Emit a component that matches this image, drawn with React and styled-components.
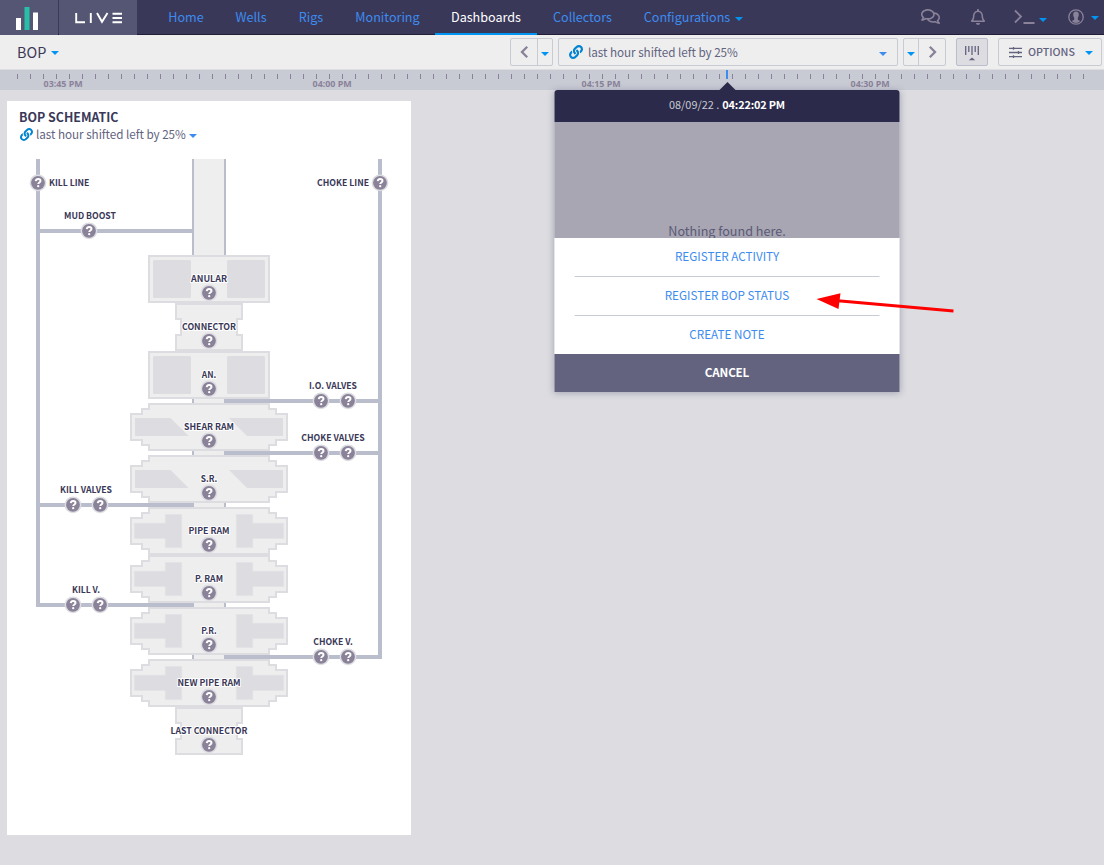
import React from 'react';
import styled, { createGlobalStyle } from 'styled-components';
import { FaLink, FaRegComments, FaRegBell } from 'react-icons/fa';

const c = {
  navy: '#3a3858', cell: '#555673', link: '#3c8cf0', azure: '#0095f3', grey: '#8a8299',
  bg: '#dcdce1', pale: '#eeeeee', pipe: '#b9bdcc', line: '#c8cad4', ink: '#3a3858', slate: '#636380',
};

const GlobalStyle = createGlobalStyle`
  * { box-sizing: border-box; }
  body {
    margin: 0; background: ${c.bg}; color: ${c.ink}; overflow: hidden;
    font-family: "Noto Sans CJK JP", "Noto Sans CJK SC", "Open Sans", sans-serif; line-height: 1;
  }
  button { font: inherit; color: inherit; margin: 0; padding: 0; border: 0; background: none; }
  svg { display: block; flex: none; }
`;

const Page = styled.div`display: flex; flex-direction: column; height: 865px; width: 1104px;`;
const Header = styled.header`display: flex; height: 35px; background: linear-gradient(${c.navy} 34px, #211e3a 34px);`;
const Brand = styled.div`
  width: ${(p) => p.$w}px; height: 35px; margin-right: ${(p) => p.$gap || 0}px; padding: ${(p) => p.$pad || 0};
  background: ${c.cell}; display: flex; align-items: center; justify-content: center;
`;
const Nav = styled.nav`display: flex; margin-left: 15px;`;
const NavItem = styled.a`
  width: ${(p) => p.$w}px; height: 35px; display: flex; align-items: center; justify-content: center; gap: 5px;
  padding: ${(p) => (p.$active ? '2px 0 0' : '0 0 0 1px')}; font-size: 12.6px; white-space: nowrap;
  color: ${(p) => (p.$active ? '#fff' : c.link)};
  border-bottom: ${(p) => (p.$active ? `2px solid ${c.azure}` : '0')};
`;
const Caret = styled.span`
  flex: none; width: 0; height: 0; border: 4px solid transparent; border-bottom: 0; border-top-color: ${(p) => p.$color || c.azure};
  margin-top: ${(p) => p.$drop || 0}px;
`;
const Tools = styled.div`display: flex; align-items: center; margin-left: auto; padding: 0 5px 2px 0; color: ${c.grey};`;
const Tool = styled.button`display: flex; align-items: center; gap: ${(p) => p.$gap || 0}px; margin-left: ${(p) => p.$ml || 0}px;`;

const Toolbar = styled.div`
  display: flex; align-items: center; height: 35px; padding: 0 2px 1px 17px; background: ${c.pale}; border-bottom: 1px solid ${c.bg};
`;
const PageName = styled.button`display: flex; align-items: center; gap: 5px; font-size: 14.4px; height: 30px; padding-top: 2px;`;
const Controls = styled.div`display: flex; margin-left: auto; height: 28px; align-items: stretch;`;
const Box = styled.div`
  display: flex; align-items: center; width: ${(p) => p.$w}px; margin-left: ${(p) => p.$ml || 0}px; height: 28px;
  border: 1px solid ${(p) => (p.$on ? '#b9bdcc' : c.line)}; border-radius: 2px; background: ${(p) => (p.$on ? c.bg : c.pale)};
  justify-content: ${(p) => p.$justify || 'flex-start'}; color: ${c.slate}; padding: ${(p) => p.$pad || 0};
`;
const Step = styled.button`
  display: flex; align-items: center; justify-content: center; height: 26px; width: ${(p) => p.$w}px;
  padding-top: ${(p) => p.$drop || 0}px;
  border-left: ${(p) => (p.$rule ? `1px solid ${c.line}` : '0')};
`;
const RangeText = styled.span`font-size: 11.7px; color: ${c.slate}; white-space: nowrap; padding-top: ${(p) => p.$drop || 0}px; letter-spacing: -0.04px;`;
const OptionText = styled.span`font-size: 10.7px; font-weight: 500; color: ${c.slate}; padding-top: 2px;`;
const Spacer = styled.span`flex: 1;`;

const Ruler = styled.div`
  height: 20px; background: ${c.line}; display: flex; flex-direction: column; padding-top: 4px;
`;
const Ticks = styled.div`
  height: 5px; width: 1067px; margin-left: 17px;
  background: repeating-linear-gradient(90deg, ${c.grey} 0 1px, transparent 1px 13px);
`;
const Times = styled.div`display: flex; margin-left: 29px;`;
const Time = styled.span`
  width: 269px; flex: none; font: 700 8.9px/10px "Open Sans", "Noto Sans", sans-serif; color: ${c.grey};
  padding-left: 14.6px; white-space: nowrap;
`;
const Main = styled.main`padding: 11px 7px 0;`;
const Card = styled.section`width: 404px; height: 734px; background: #fff;`;
const CardHead = styled.div`height: 58px; padding: 9px 12px 0;`;
const CardTitle = styled.h1`margin: 0; font-size: 12.4px; line-height: 15px; font-weight: 700;`;
const CardRange = styled.div`display: flex; align-items: center; height: 16px; margin: 1px 0 0 1px; gap: 3px;`;
const Label = styled.text`
  font-size: 9px; font-weight: 700; fill: ${c.ink}; stroke: #fff; stroke-width: 2px; stroke-linejoin: round; paint-order: stroke;
`;

const Marker = styled.div`position: absolute; left: 726px; top: 70px; width: 2px; height: 9px; background: ${c.link};`;
const Popup = styled.section`
  position: absolute; left: 554px; top: 90px; width: 345px; height: 302px; border-radius: 3px 3px 0 0; transform: translateX(0.5px);
  box-shadow: 0 1px 7px rgba(58, 56, 88, 0.35); display: flex; flex-direction: column;
  &::before {
    content: ''; position: absolute; left: 164.5px; top: -8px; border: 8px solid transparent; border-top: 0; border-bottom-color: #2b2a4a;
  }
`;
const PopupHead = styled.header`
  height: 32px; background: #2b2a4a; border-radius: 3px 3px 0 0; color: #c8cad4; font-size: 10.9px;
  display: flex; align-items: center; justify-content: center; gap: 3px; padding-bottom: 4px; white-space: nowrap;
  b { color: #fff; font-weight: 700; letter-spacing: -0.18px; }
`;
const Empty = styled.div`
  height: 116px; background: #a7a6b2; color: #5b5977; font-size: 12.6px; line-height: 14px; padding-top: 102px; text-align: center; overflow: hidden;
`;
const Actions = styled.div`height: 116px; background: #fff; padding: 0 20px;`;
const Action = styled.button`
  display: block; width: 100%; height: 39px; padding-bottom: 3px; font-size: 11.7px; color: ${c.link};
  border-bottom: 1px solid ${c.line};
  &:last-child { border-bottom: 0; height: 38px; padding-bottom: 2px; }
`;
const Cancel = styled.button`&& { height: 38px; background: ${c.slate}; color: #fff; font-size: 11.7px; font-weight: 700; padding-bottom: 3px; letter-spacing: -0.2px; }`;
const Pointer = styled.svg`position: absolute; left: 810px; top: 285px;`;

function Logo() {
  return (
    <svg width="24" height="24" viewBox="0 0 24 24">
      <path fill="#fff" d="M1 12h5v12H1zM18 6.500h5V24h-5z" /><path fill="#28bfa8" d="M9.500 1h5v23h-5z" />
    </svg>
  );
}
function LiveMark() {
  return (
    <svg width="48" height="12" viewBox="0 0 48 12" fill="none" stroke="#fff" strokeWidth="1.900">
      <path d="M1.200 1v9.200H10M15.800 1v10M22 1l5 8.800L32.500 1M37.500 1.700h9.500M37.500 6h9.500M37.500 10.200h9.500" />
    </svg>
  );
}
function Chevron({ back }) {
  return (
    <svg width="9" height="12" viewBox="0 0 9 12" fill="none" stroke={c.grey} strokeWidth="2.300">
      <path d={back ? 'M7.200 0.800L2 6l5.200 5.200' : 'M1.800 0.800L7 6l-5.200 5.200'} />
    </svg>
  );
}

function Help({ x, y }) {
  return (
    <g transform={`translate(${x} ${y})`}>
      <circle r="8.400" fill={c.bg} /><circle r="6.900" fill={c.grey} />
      <path d="M-2.300-1.600C-2.100-3.200-1.100-3.800.2-3.800 1.500-3.800 2.500-3 2.500-1.900 2.500-.3.200-.3.200 1.300" fill="none" stroke="#fff" strokeWidth="1.900" />
      <circle cx=".2" cy="3.400" r="1.150" fill="#fff" />
    </g>
  );
}
function Tag({ x, y, w, children }) {
  return <Label x={x - w / 2} y={y} textLength={w} lengthAdjust="spacingAndGlyphs">{children}</Label>;
}

const frames = {
  anular: 'M149 1h120v46H149z',
  connector: 'M176 1h66v15h-5v16h5v15h-66V32h5V16h-5z',
  ram: 'M149 1h120v5h7v5h11v26h-11v5h-7v5H149v-5h-7v-5h-11V11h11V6h7z',
};
const inner = {
  anular: <><rect x="153" y="5" width="38" height="38" rx="1.500" /><rect x="227" y="5" width="38" height="38" rx="1.500" /></>,
  shear: <path d="M135 15h35.500l18 18H135zM283 15h-54l18 18h36z" />,
  pipe: <path stroke="#e2e2e5" strokeWidth=".7" d="M134.300 16.300h31v-8.700h16.400v33h-16.400v-9.200h-31zM283.700 16.300h-31v-8.700h-16.400v33h16.400v-9.200h31z" />,
};
const stack = [
  ['ANULAR', 'anular', 255, 36], ['CONNECTOR', 'connector', 303, 54], ['AN.', 'anular', 351, 14.5],
  ['SHEAR RAM', 'shear', 403, 50], ['S.R.', 'shear', 455, 16.5], ['PIPE RAM', 'pipe', 507, 41],
  ['P. RAM', 'pipe', 555, 28], ['P.R.', 'pipe', 607, 15.5], ['NEW PIPE RAM', 'pipe', 659, 63],
  ['LAST CONNECTOR', 'connector', 707, 77],
];
const valves = [
  ['I.O. VALVES', 333, 401, 48], ['CHOKE VALVES', 333, 453, 63.5], ['CHOKE V.', 333, 657, 39.5],
  ['KILL VALVES', 86, 505, 52], ['KILL V.', 86, 605, 28],
];

function Schematic() {
  return (
    <svg width="404" height="606" viewBox="7 159 404 606">
      <path fill={c.pale} stroke={c.pipe} strokeWidth="2" d="M193 150v520h32V150" />
      <path fill="none" stroke={c.pipe} strokeWidth="4" d="M38 159v446h156M38 231h154M38 505h156M380 159v498H224M380 401H224M380 453H224" />
      {stack.map(([name, kind, y, w]) => (
        <g key={name} transform={`translate(0 ${y})`}>
          <path d={frames[kind] || frames.ram} fill={c.pale} stroke={c.bg} strokeWidth="2" />
          <g fill={c.bg}>{inner[kind]}</g>
          <Help x={209} y={37.8} />
          <Tag x={209} y={27} w={w}>{name}</Tag>
        </g>
      ))}
      {valves.map(([name, x, y, w]) => (
        <g key={name}>
          <Help x={x - 12 - (x < 200 ? 1 : 0)} y={y - 0.2} /><Help x={x + 15 - (x < 200 ? 1 : 0)} y={y - 0.2} />
          <Tag x={x} y={y - 12} w={w}>{name}</Tag>
        </g>
      ))}
      <Help x={38} y={182.8} /><Tag x={69.2} y={186} w={40.5}>KILL LINE</Tag>
      <Help x={380} y={182.8} /><Tag x={343} y={186} w={52}>CHOKE LINE</Tag>
      <Help x={89} y={230.8} /><Tag x={90} y={219} w={52}>MUD BOOST</Tag>
    </svg>
  );
}

const nav = [['Home', 67], ['Wells', 63], ['Rigs', 57], ['Monitoring', 96], ['Dashboards', 102], ['Collectors', 90], ['Configurations', 132]];

export default function App() {
  return (
    <Page>
      <GlobalStyle />
      <Header>
        <Brand $w={58} $gap={1} $pad="0 4px 0 0"><Logo /></Brand>
        <Brand $w={78} $pad="0 0 0 2px"><LiveMark /></Brand>
        <Nav>
          {nav.map(([name, w]) => (
            <NavItem key={name} $w={w} $active={name === 'Dashboards'}>
              {name}{name === 'Configurations' && <Caret $drop={3} />}
            </NavItem>
          ))}
        </Nav>
        <Tools>
          <Tool><FaRegComments size={19} /></Tool>
          <Tool $ml={30}><FaRegBell size={16} /></Tool>
          <Tool $ml={28} $gap={4}>
            <svg width="21" height="15" viewBox="0 0 21 15" fill="none" stroke={c.grey} strokeWidth="1.800"><path d="M1 1.500l6 6-6 6M9.500 14H20.500" /></svg>
            <Caret $drop={6} />
          </Tool>
          <Tool $ml={21} $gap={7}>
            <svg width="16" height="16" viewBox="0 0 16 16">
              <circle cx="8" cy="8" r="7.200" fill="none" stroke={c.grey} strokeWidth="1.300" />
              <path fill={c.grey} d="M8 2.600c1.800 0 2.800 1.200 2.800 2.900 0 1.500-.5 2.500-1 3.200v1.800c.1.700 1.500.9 2.300 1.500C11.300 13.300 9.700 14 8 14s-3.300-.7-4.100-2c.8-.6 2.200-.8 2.300-1.500V8.700c-.5-.7-1-1.700-1-3.200C5.200 3.800 6.200 2.600 8 2.600z" />
            </svg>
            <Caret $drop={2} />
          </Tool>
        </Tools>
      </Header>
      <Toolbar>
        <PageName>BOP <Caret /></PageName>
        <Controls>
          <Box $w={43}><Step $w={26} $drop={1}><Chevron back /></Step><Step $w={15} $rule><Caret $drop={4} /></Step></Box>
          <Box $w={340} $ml={5} $pad="0 10px">
            <FaLink size={14} color="#0083d0" style={{ marginRight: 5 }} />
            <RangeText $drop={1}>last hour shifted left by 25%</RangeText><Spacer /><Caret $color={c.link} $drop={4} />
          </Box>
          <Box $w={43} $ml={5}><Step $w={14}><Caret $drop={4} /></Step><Step $w={27} $rule $drop={1}><Chevron /></Step></Box>
          <Box $w={32} $ml={10} $on $justify="center" $pad="3px 0 0">
            <svg width="14" height="15" viewBox="0 0 14 15">
              <path d="M.7 0v9M3.800 0v6M7 0v9M10.200 0v6M13.300 0v9" stroke={c.slate} strokeWidth="1.300" /><path d="M7 11.500l3.200 2.700H3.800z" fill={c.slate} />
            </svg>
          </Box>
          <Box $w={104} $ml={10} $pad="0 8px 0 10px">
            <svg width="13" height="11" viewBox="0 0 13 11" stroke={c.slate} strokeWidth="1.300" style={{ marginRight: 6, marginTop: 1 }}>
              <path d="M0 1.300h13M0 5.500h13M0 9.700h13M4.500 0v2.800M9.500 4v3M4.500 8.200V11" />
            </svg>
            <OptionText>OPTIONS</OptionText><Spacer /><Caret $drop={2} />
          </Box>
        </Controls>
      </Toolbar>
      <Ruler>
        <Ticks />
        <Times>{['03:45 PM', '04:00 PM', '04:15 PM', '04:30 PM'].map((t) => <Time key={t}>{t}</Time>)}</Times>
      </Ruler>
      <Main>
        <Card>
          <CardHead>
            <CardTitle>BOP SCHEMATIC</CardTitle>
            <CardRange><FaLink size={13} color="#0083d0" /><RangeText>last hour shifted left by 25%</RangeText><Caret $color={c.link} $drop={3} /></CardRange>
          </CardHead>
          <Schematic />
        </Card>
      </Main>
      <Marker />
      <Popup>
        <PopupHead><span>08/09/22 .</span><b>04:22:02 PM</b></PopupHead>
        <Empty>Nothing found here.</Empty>
        <Actions><Action>REGISTER ACTIVITY</Action><Action>REGISTER BOP STATUS</Action><Action>CREATE NOTE</Action></Actions>
        <Cancel>CANCEL</Cancel>
      </Popup>
      <Pointer width="150" height="35" viewBox="810 285 150 35">
        <path d="M838 300.700l115.500 10.400" stroke="red" strokeWidth="3" /><path d="M816.500 299l24-5.700-2 15.600z" fill="red" />
      </Pointer>
    </Page>
  );
}
